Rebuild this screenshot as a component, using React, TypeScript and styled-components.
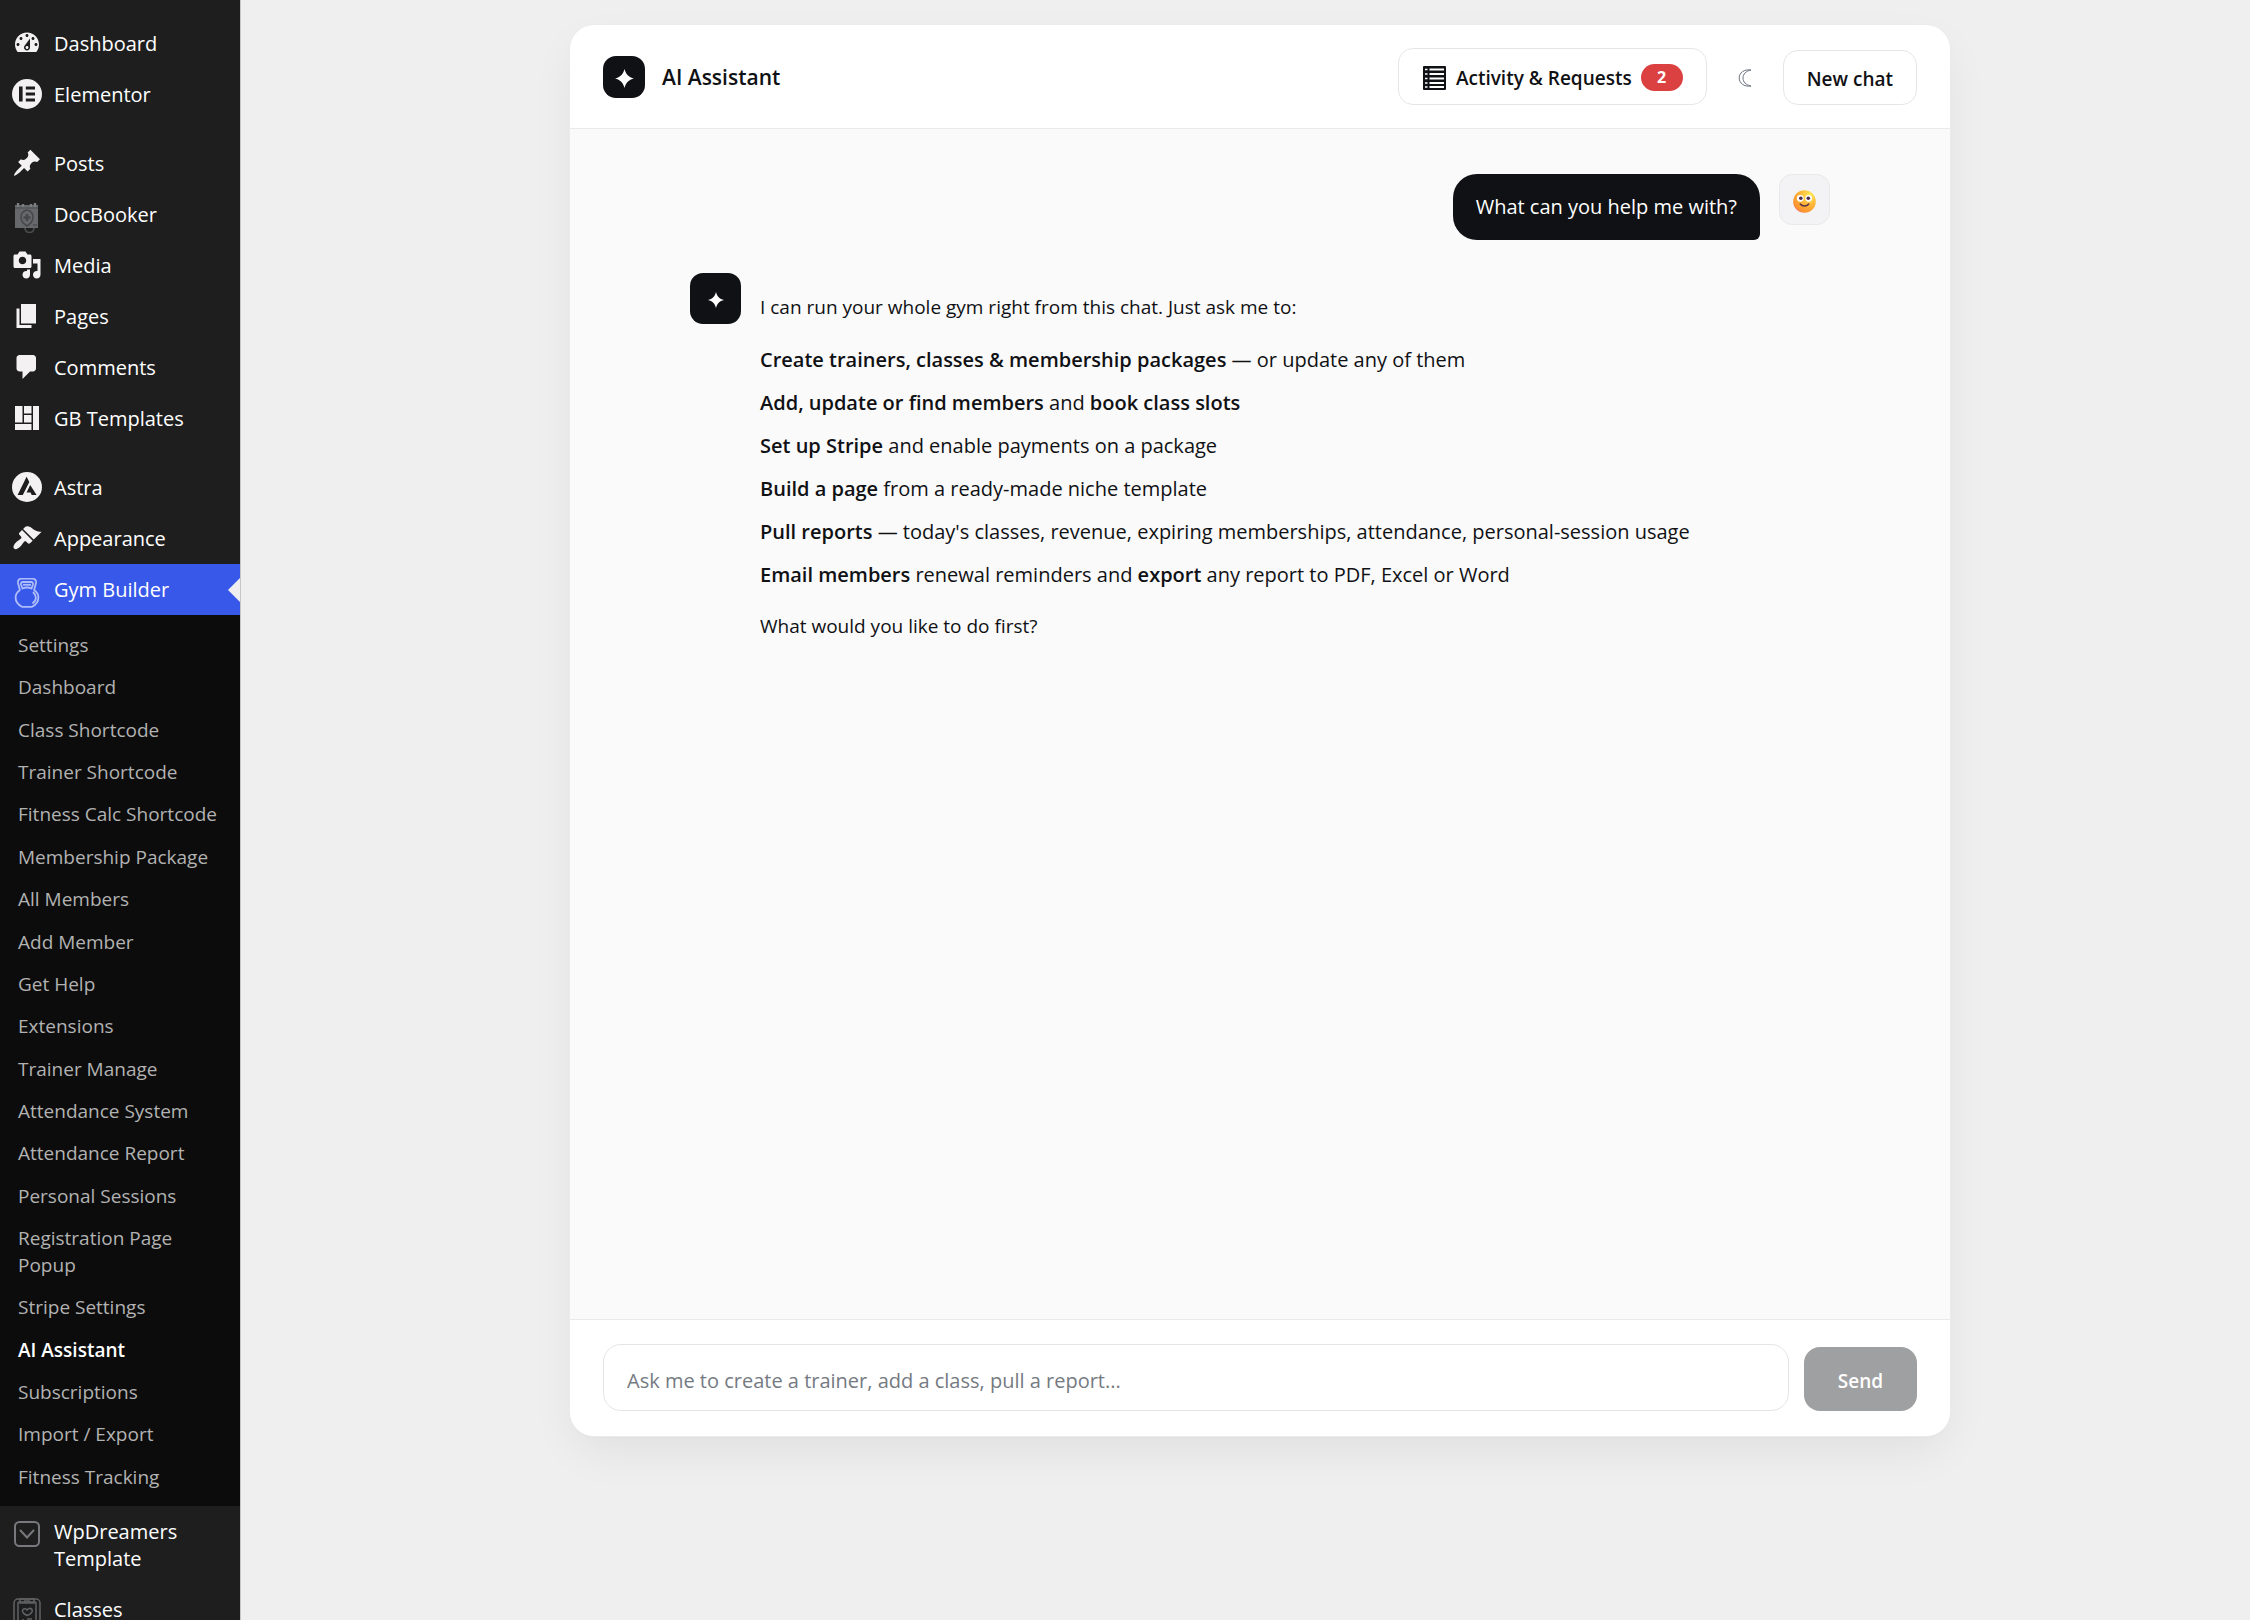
import React from 'react';
import styled, { createGlobalStyle } from 'styled-components';

const GlobalStyle = createGlobalStyle`
  *, *::before, *::after { box-sizing: border-box; }
  body {
    margin: 0;
    background: #efefef;
    color: #101114;
    font-family: 'Open Sans', 'Noto Sans', sans-serif;
    font-size: 20px;
  }
  button, input { font: inherit; color: inherit; }
  ul { list-style: none; margin: 0; padding: 0; }
  p { margin: 0; }
`;

/* ---------- admin layout ---------- */

const Layout = styled.div`
  display: flex;
  height: 100vh;
  overflow: hidden;
`;

const Sidebar = styled.nav`
  flex: 0 0 240px;
  padding-top: 18px;
  background: #1e1e1e;
  box-shadow: 1px 0 0 #c6c6c6;
`;

const MenuGroup = styled.ul`
  & + & { margin-top: 18px; }
`;

const MenuLink = styled.a<{ $active?: boolean }>`
  position: relative;
  display: flex;
  align-items: flex-start;
  padding-left: 12px;
  color: #fff;
  text-decoration: none;
  background: ${(p) => (p.$active ? '#3858e9' : 'transparent')};

  &::after {
    content: ${(p) => (p.$active ? "''" : 'none')};
    position: absolute;
    right: 0;
    top: 50%;
    margin-top: -12px;
    border: 12px solid transparent;
    border-left-width: 0;
    border-right-color: #efefef;
  }
`;

const MenuIcon = styled.span<{ $picture?: boolean }>`
  flex: 0 0 30px;
  height: 30px;
  margin: ${(p) => (p.$picture ? '14px' : '10px')} 12px 0 0;
  color: ${(p) => (p.$picture ? '#77797c' : '#f3f1f1')};

  svg { display: block; width: 30px; height: 30px; }
`;

const MenuLabel = styled.span`
  padding: 12px 24px 12px 0;
  line-height: 27px;
`;

const SubMenu = styled.ul`
  display: flex;
  flex-direction: column;
  justify-content: space-between;
  min-height: 891px;
  padding: 10px 0 7px;
  background: #0c0c0c;
`;

const SubLink = styled.a<{ $current?: boolean }>`
  display: block;
  padding: 7px 18px 8px;
  font-size: 19px;
  line-height: 27px;
  text-decoration: none;
  color: ${(p) => (p.$current ? '#fff' : '#b2b2b2')};
  font-weight: ${(p) => (p.$current ? 600 : 400)};
`;

const Content = styled.main`
  flex: 1;
  min-width: 0;
  padding: 25px 0 0 30px;
`;

/* ---------- chat panel ---------- */

const Panel = styled.section`
  display: flex;
  flex-direction: column;
  max-width: 1380px;
  height: calc(100vh - 209px);
  margin: 0 auto;
  overflow: hidden;
  background: #fff;
  border-radius: 24px;
  box-shadow: 0 0 0 1px #ebebec, 0 1px 3px rgba(16, 17, 20, 0.04), 0 18px 48px -6px rgba(16, 17, 20, 0.07);
`;

const PanelHeader = styled.header`
  display: flex;
  align-items: center;
  gap: 17px;
  padding: 23px 33px;
  border-bottom: 1px solid #e9e9ea;
`;

const Title = styled.h1`
  flex: 1;
  margin: 0;
  font-size: 21px;
  font-weight: 600;
  line-height: 30px;
`;

const HeaderActions = styled.div`
  display: flex;
  align-items: flex-end;
  gap: 15px;
`;

const OutlineButton = styled.button<{ $tall?: boolean }>`
  display: flex;
  align-items: center;
  gap: 9px;
  height: ${(p) => (p.$tall ? '57px' : '55px')};
  padding: 2px 23px 0;
  background: #fff;
  border: 1px solid #e6e6e8;
  border-radius: 15px;
  font-size: 19px;
  font-weight: 600;
  white-space: nowrap;
`;

const ThemeButton = styled.button`
  display: grid;
  place-items: center;
  width: 46px;
  height: 55px;
  padding: 0;
  background: none;
  border: 0;
  color: #6b7280;
`;

const Badge = styled.span`
  min-width: 42px;
  padding: 0 12px;
  border-radius: 14px;
  background: #dc4141;
  color: #fff;
  font-size: 16px;
  font-weight: 700;
  line-height: 27px;
  text-align: center;
`;

const BrandTile = styled.div<{ $size: number }>`
  flex: none;
  display: grid;
  place-items: center;
  width: ${(p) => p.$size}px;
  height: ${(p) => p.$size}px;
  padding-top: 3px;
  border-radius: 13px;
  background: #101114;
  color: #fff;
`;

const Conversation = styled.div`
  flex: 1;
  min-height: 0;
  overflow: auto;
  padding: 45px 33px;
  background: #fafafa;
`;

const Thread = styled.div`
  display: flex;
  flex-direction: column;
  gap: 33px;
  max-width: 1140px;
  margin: 0 auto;
`;

const Message = styled.article<{ $own?: boolean }>`
  display: flex;
  align-items: flex-start;
  gap: 19px;
  justify-content: ${(p) => (p.$own ? 'flex-end' : 'flex-start')};
`;

const Bubble = styled.p`
  padding: 17px 23px;
  border-radius: 24px 24px 6px 24px;
  background: #101114;
  color: #fff;
  line-height: 32px;
`;

const UserAvatar = styled.div`
  flex: none;
  display: grid;
  place-items: center;
  width: 51px;
  height: 51px;
  padding-top: 3px;
  background: #f3f3f5;
  border: 1px solid #e9e9ea;
  border-radius: 13px;
`;

const Reply = styled.div`
  display: flex;
  flex-direction: column;
  gap: 21px;
  padding-top: 19px;
  line-height: 31px;
`;

const ReplyText = styled.p`
  font-size: 19px;
`;

const ReplyList = styled.ul`
  display: grid;
  gap: 12px;

  strong { font-weight: 600; }
`;

const Composer = styled.form`
  display: flex;
  align-items: flex-end;
  gap: 15px;
  padding: 24px 33px 25px;
  border-top: 1px solid #e9e9ea;
`;

const PromptInput = styled.input`
  flex: 1;
  min-width: 0;
  height: 67px;
  padding: 5px 23px 0;
  background: #fff;
  border: 1px solid #e4e4e6;
  border-radius: 18px;
  outline: none;

  &::placeholder { color: #757a82; opacity: 1; }
`;

const SendButton = styled.button`
  width: 113px;
  height: 64px;
  padding: 3px 0 0;
  border: 0;
  border-radius: 16px;
  background: #9fa0a1;
  color: #fff;
  font-size: 19px;
  font-weight: 600;
`;

/* ---------- drawings ---------- */

const Glyph = ({ d }: { d: string }) => (
  <svg viewBox="0 0 20 20" fill="currentColor" aria-hidden="true">
    <path d={d} />
  </svg>
);

const glyphs = {
  dashboard:
    'M3.76 16h12.48c1.1-1.37 1.76-3.11 1.76-5 0-4.42-3.58-8-8-8s-8 3.58-8 8c0 1.89.66 3.63 1.76 5zM10 4c.55 0 1 .45 1 1s-.45 1-1 1-1-.45-1-1 .45-1 1-1zM6 6c.55 0 1 .45 1 1s-.45 1-1 1-1-.45-1-1 .45-1 1-1zm8 0c.55 0 1 .45 1 1s-.45 1-1 1-1-.45-1-1 .45-1 1-1zm-5.37 5.55L12 7v6c0 1.1-.9 2-2 2s-2-.9-2-2c0-.57.24-1.08.63-1.45zM4 10c.55 0 1 .45 1 1s-.45 1-1 1-1-.45-1-1 .45-1 1-1zm12 0c.55 0 1 .45 1 1s-.45 1-1 1-1-.45-1-1 .45-1 1-1zm-5 3c0-.55-.45-1-1-1s-1 .45-1 1 .45 1 1 1 1-.45 1-1z',
  pin: 'M10.44 3.02l1.82-1.82 6.36 6.35-1.83 1.82c-1.05-.68-2.48-.57-3.41.36l-.75.75c-.92.93-1.04 2.35-.35 3.41l-1.83 1.82-2.41-2.41-2.8 2.79c-.42.42-3.38 2.71-3.8 2.29s1.86-3.39 2.28-3.81l2.79-2.79L4.1 9.36l1.83-1.82c1.05.69 2.48.57 3.4-.36l.75-.75c.93-.92 1.05-2.35.36-3.41z',
  media:
    'M13 11V4c0-.55-.45-1-1-1h-1.67L9 1H5L3.67 3H2c-.55 0-1 .45-1 1v7c0 .55.45 1 1 1h10c.55 0 1-.45 1-1zM7 4.5c1.38 0 2.5 1.12 2.5 2.5S8.38 9.5 7 9.5 4.5 8.38 4.5 7 5.62 4.5 7 4.5zM14 6h5v10.5c0 1.38-1.12 2.5-2.5 2.5S14 17.88 14 16.5s1.12-2.5 2.5-2.5c.17 0 .34.02.5.05V9h-3V6zm-4 8.05V13h2v3.5c0 1.38-1.12 2.5-2.5 2.5S7 17.88 7 16.5 8.12 14 9.5 14c.17 0 .34.02.5.05z',
  pages: 'M6 15V2h10v13H6zm-1 1h8v2H3V5h2v11z',
  comments: 'M5 2h9c1.1 0 2 .9 2 2v7c0 1.1-.9 2-2 2h-2l-5 5v-5H5c-1.1 0-2-.9-2-2V4c0-1.1.9-2 2-2z',
  layout: 'M2 2h5v11H2V2zm6 0h5v5H8V2zm6 0h4v16h-4V2zM8 8h5v5H8V8zm-6 6h11v4H2v-4z',
  brush:
    'M14.48 11.06L7.41 3.99l1.5-1.5c.5-.56 2.3-.47 3.51.32 1.21.8 1.43 1.28 2.91 2.1 1.18.64 2.45 1.26 4.45.85zm-.71.71L6.7 4.7 4.93 6.47c-.39.39-.39 1.02 0 1.41l1.06 1.06c.39.39.39 1.03 0 1.42-.6.6-1.43 1.11-2.21 1.69-.35.26-.7.53-1.01.84C1.43 14.23.4 16.08 1.4 17.07c.99 1 2.84-.03 4.18-1.36.31-.31.58-.66.85-1.02.57-.78 1.08-1.61 1.69-2.21.39-.39 1.02-.39 1.41 0l1.06 1.06c.39.39 1.02.39 1.41 0z',
};

const ElementorIcon = () => (
  <svg viewBox="0 0 30 30" aria-hidden="true">
    <circle cx="15" cy="15" r="15" fill="currentColor" />
    <path d="M7 7.5h3.6v15H7zM13.8 7.5H23v3h-9.2zM13.8 13.5H23v3h-9.2zM13.8 19.5H23v3h-9.2z" fill="#1e1e1e" />
  </svg>
);

const AstraIcon = () => (
  <svg viewBox="0 0 30 30" aria-hidden="true">
    <circle cx="15" cy="15" r="15" fill="currentColor" />
    <path d="M14.6 4.8l2.7 5.2-6.5 13.1H5.6zM18.2 13l6.4 10.1h-4.9l-1.1-2.7h-4z" fill="#1e1e1e" />
  </svg>
);

const DocBookerIcon = () => (
  <svg viewBox="0 0 30 30" fill="none" aria-hidden="true">
    <path d="M3 2h23v23H3z" fill="#66686b" />
    <path d="M6 0v4M11 1v3M19 1v3M23 0v4" stroke="#7b7d80" strokeWidth="2.4" />
    <path d="M3 5h23" stroke="#4a4b4d" />
    <path d="M15 7c4 1 6 3 6 7 0 5-3 7-6 9-3-2-6-4-6-9 0-4 2-6 6-7z" stroke="#46484a" strokeWidth="1.6" />
    <path d="M15 11v7M11.500 14.500h7" stroke="#46484a" strokeWidth="2.600" />
    <path d="M13 25c0 6 9 6 9 0M21 22h4" stroke="#4c4e50" strokeWidth="1.600" />
  </svg>
);

const KettlebellIcon = () => (
  <svg viewBox="0 0 30 30" fill="none" stroke="#aebcfa" strokeWidth="1.800" aria-hidden="true">
    <path d="M8 12.500L6 5c-.4-2.600 1-4.300 3.500-4.300h11C23 .7 24.400 2.400 24 5l-2 7.500" />
    <path d="M10.500 10.500L9 6.500c-.3-1.700.4-2.500 2-2.500h8c1.600 0 2.300.8 2 2.500l-1.500 4c-3-1.300-6-1.300-9 0z" />
    <path d="M11 6.800h8" />
    <path d="M8 12c-3 2-4.400 4.500-4.400 7.500 0 4 2.800 7.500 6.400 9.300h10c3.600-1.800 6.400-5.300 6.400-9.300 0-3-1.400-5.500-4.400-7.500" />
    <path d="M21 14c2 2 2.900 3.500 2.900 5.500 0 2.500-1.400 4.600-3.400 6" />
  </svg>
);

const TemplateIcon = () => (
  <svg viewBox="0 0 30 30" fill="none" stroke="currentColor" strokeWidth="2" strokeLinecap="round" aria-hidden="true">
    <rect x="3" y="2" width="24" height="24" rx="4.500" />
    <path d="M8.500 10.500l6.500 7 6.500-7" />
  </svg>
);

const ClassesIcon = () => (
  <svg viewBox="0 0 30 30" fill="none" stroke="#606264" strokeWidth="1.500" aria-hidden="true">
    <rect x="2" y="1" width="26" height="33" rx="4" />
    <rect x="6" y="4" width="18" height="29" rx="1" />
    <path d="M8 1h14v4H8zM12 3h6" />
    <path d="M15 17.500c-4-2-5.500-4-4-6 1.200-1.400 3-1 4 .5 1-1.500 3.500-2.500 5-.5 1.200 2-1 4.500-5 6z" />
    <path d="M11 21v6M15 21h5M15 24h5" />
  </svg>
);

const Sparkle = ({ size }: { size: number }) => (
  <svg width={size} height={size} viewBox="0 0 18 18" fill="currentColor" aria-hidden="true">
    <path d="M9 0c1.200 5 4 7.800 9 9-5 1.200-7.800 4-9 9-1.200-5-4-7.800-9-9 5-1.200 7.800-4 9-9z" />
  </svg>
);

const RequestsIcon = () => (
  <svg width="25" height="26" viewBox="0 0 25 26" aria-hidden="true">
    <rect x="1" y="1" width="23" height="24" rx="1" fill="#101114" />
    <path d="M3 4.500h2.500M3 9h2.500M3 13.500h2.500M3 18h2.500M3 22h2.500" stroke="#fff" strokeWidth="1.400" />
    <path d="M7.500 4.500H22M7.500 9H22M7.500 13.500H22M7.500 18H22M7.500 22H22" stroke="#fff" strokeWidth="1.800" />
  </svg>
);

const MoonIcon = () => (
  <svg width="14" height="18" viewBox="0 0 14 18" fill="none" stroke="currentColor" strokeWidth="1" aria-hidden="true">
    <path d="M13 1C6 0 1.200 3.800 1.200 9S6 18 13 17C8 16 5 13 5 9s3-7 8-8z" />
  </svg>
);

const SmileyIcon = () => (
  <svg width="23" height="23" viewBox="0 0 23 23" aria-hidden="true">
    <defs>
      <radialGradient id="face" cx="0.750" cy="0.200" r="0.950">
        <stop offset="0" stopColor="#ffe755" />
        <stop offset="0.550" stopColor="#fdb035" />
        <stop offset="0.850" stopColor="#fb9330" />
        <stop offset="1" stopColor="#f0607c" />
      </radialGradient>
    </defs>
    <circle cx="11.500" cy="11.500" r="11.300" fill="url(#face)" />
    <circle cx="7.300" cy="8.300" r="3.400" fill="#fff" />
    <circle cx="15.700" cy="8.300" r="3.400" fill="#fff" />
    <circle cx="7.800" cy="8.300" r="1.800" fill="#4a2b4c" />
    <circle cx="15.300" cy="8.300" r="1.800" fill="#4a2b4c" />
    <path d="M7.200 14c2.200 2.800 6.400 2.800 8.600 0" fill="none" stroke="#5b3148" strokeWidth="1.500" strokeLinecap="round" />
  </svg>
);

/* ---------- data ---------- */

interface Entry {
  label: string;
  icon: React.ReactNode;
  picture?: boolean;
  children?: string[];
}

const gymPages = [
  'Settings', 'Dashboard', 'Class Shortcode', 'Trainer Shortcode', 'Fitness Calc Shortcode',
  'Membership Package', 'All Members', 'Add Member', 'Get Help', 'Extensions', 'Trainer Manage',
  'Attendance System', 'Attendance Report', 'Personal Sessions', 'Registration Page Popup',
  'Stripe Settings', 'AI Assistant', 'Subscriptions', 'Import / Export', 'Fitness Tracking',
];

const menu: Entry[][] = [
  [
    { label: 'Dashboard', icon: <Glyph d={glyphs.dashboard} /> },
    { label: 'Elementor', icon: <ElementorIcon /> },
  ],
  [
    { label: 'Posts', icon: <Glyph d={glyphs.pin} /> },
    { label: 'DocBooker', icon: <DocBookerIcon />, picture: true },
    { label: 'Media', icon: <Glyph d={glyphs.media} /> },
    { label: 'Pages', icon: <Glyph d={glyphs.pages} /> },
    { label: 'Comments', icon: <Glyph d={glyphs.comments} /> },
    { label: 'GB Templates', icon: <Glyph d={glyphs.layout} /> },
  ],
  [
    { label: 'Astra', icon: <AstraIcon /> },
    { label: 'Appearance', icon: <Glyph d={glyphs.brush} /> },
    { label: 'Gym Builder', icon: <KettlebellIcon />, picture: true, children: gymPages },
    { label: 'WpDreamers Template', icon: <TemplateIcon />, picture: true },
    { label: 'Classes', icon: <ClassesIcon />, picture: true },
  ],
];

const abilities: React.ReactNode[] = [
  <><strong>Create trainers, classes &amp; membership packages</strong> — or update any of them</>,
  <><strong>Add, update or find members</strong> and <strong>book class slots</strong></>,
  <><strong>Set up Stripe</strong> and enable payments on a package</>,
  <><strong>Build a page</strong> from a ready-made niche template</>,
  <><strong>Pull reports</strong> — today's classes, revenue, expiring memberships, attendance, personal-session usage</>,
  <><strong>Email members</strong> renewal reminders and <strong>export</strong> any report to PDF, Excel or Word</>,
];

export default function App() {
  return (
    <>
      <GlobalStyle />
      <Layout>
        <Sidebar>
          {menu.map((group, i) => (
            <MenuGroup key={i}>
              {group.map((entry) => (
                <li key={entry.label}>
                  <MenuLink href="#" $active={Boolean(entry.children)}>
                    <MenuIcon $picture={entry.picture}>{entry.icon}</MenuIcon>
                    <MenuLabel>{entry.label}</MenuLabel>
                  </MenuLink>
                  {entry.children && (
                    <SubMenu>
                      {entry.children.map((page) => (
                        <li key={page}>
                          <SubLink href="#" $current={page === 'AI Assistant'}>{page}</SubLink>
                        </li>
                      ))}
                    </SubMenu>
                  )}
                </li>
              ))}
            </MenuGroup>
          ))}
        </Sidebar>

        <Content>
          <Panel>
            <PanelHeader>
              <BrandTile $size={42}><Sparkle size={19} /></BrandTile>
              <Title>AI Assistant</Title>
              <HeaderActions>
                <OutlineButton type="button" $tall>
                  <RequestsIcon />
                  Activity &amp; Requests
                  <Badge>2</Badge>
                </OutlineButton>
                <ThemeButton type="button" aria-label="Dark mode"><MoonIcon /></ThemeButton>
                <OutlineButton type="button">New chat</OutlineButton>
              </HeaderActions>
            </PanelHeader>

            <Conversation>
              <Thread>
                <Message $own>
                  <Bubble>What can you help me with?</Bubble>
                  <UserAvatar><SmileyIcon /></UserAvatar>
                </Message>
                <Message>
                  <BrandTile $size={51}><Sparkle size={16} /></BrandTile>
                  <Reply>
                    <ReplyText>I can run your whole gym right from this chat. Just ask me to:</ReplyText>
                    <ReplyList>
                      {abilities.map((ability, i) => <li key={i}>{ability}</li>)}
                    </ReplyList>
                    <ReplyText>What would you like to do first?</ReplyText>
                  </Reply>
                </Message>
              </Thread>
            </Conversation>

            <Composer onSubmit={(e) => e.preventDefault()}>
              <PromptInput
                type="text"
                aria-label="Message"
                placeholder="Ask me to create a trainer, add a class, pull a report..."
              />
              <SendButton type="submit">Send</SendButton>
            </Composer>
          </Panel>
        </Content>
      </Layout>
    </>
  );
}
